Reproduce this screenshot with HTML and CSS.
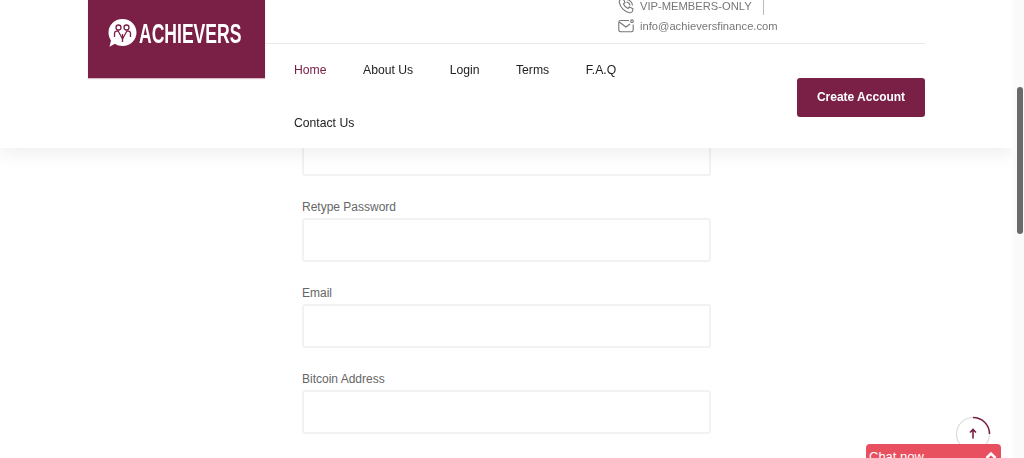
FILE: index.html
```html
<!DOCTYPE html>
<html lang="en">
<head>
    <meta charset="UTF-8">
    <meta name="viewport" content="width=device-width, initial-scale=1.0">
    <title>Achievers - Register</title>
    <link rel="stylesheet" href="styles.css">
</head>
<body>
    <header class="site-header">
        <a class="logo" href="#">
            <svg class="logo-icon" width="29" height="30" viewBox="0 0 29 30">
                <path fill="#fff" d="M14.500 1C22.500 1 28.500 7 28.500 14.500S22.500 28 14.500 28C11.500 28 9 27.200 7 25.800L1.500 28.800L3 22.500C1.500 20.200 .5 17.500 .5 14.500C.5 7 6.500 1 14.500 1Z"/>
                <g fill="none" stroke="#7a1f47" stroke-width="1.300">
                    <circle cx="10.500" cy="9.500" r="2.500"/>
                    <circle cx="18.500" cy="9.500" r="2.500"/>
                    <path d="M6.500 19V15.500C6.500 13.500 8 12.800 10 12.800L14.500 21L19 12.800C21 12.800 22.500 13.500 22.500 15.500V19"/>
                    <path d="M14.500 16V24"/>
                </g>
            </svg>
            <span class="logo-text">ACHIEVERS</span>
        </a>

        <div class="header-right">
            <div class="contact-bar">
                <div class="contact-row">
                    <svg class="contact-icon" width="16" height="16" viewBox="0 0 16 16" fill="none" stroke="#777" stroke-width="1.100">
                        <path d="M3.200 1.500L5.300 1L7 4.500L5.500 6C6.300 8 8 9.700 10 10.500L11.500 9L15 10.700L14.500 12.800C14.200 14.200 13 15 11.700 14.700C6.500 13.700 2.300 9.500 1.300 4.300C1 3 1.800 1.800 3.200 1.500Z"/>
                        <path d="M8.500 1.500C11.700 1.700 14.300 4.300 14.500 7.500"/>
                        <path d="M8.500 4C10.300 4.200 11.800 5.700 12 7.500"/>
                    </svg>
                    <span class="contact-text">VIP-MEMBERS-ONLY</span>
                    <span class="contact-sep"></span>
                </div>
                <div class="contact-row">
                    <svg class="contact-icon" width="16" height="14" viewBox="0 0 16 14" fill="none" stroke="#777" stroke-width="1.100">
                        <path d="M11 1.500H2.500C1.500 1.500 .8 2.200 .8 3.200V11C.8 12 1.500 12.700 2.500 12.700H13.500C14.500 12.700 15.200 12 15.200 11V5.500"/>
                        <path d="M1.200 3L8 8L12 5"/>
                        <circle cx="14" cy="2.200" r="1.300"/>
                    </svg>
                    <span class="contact-text">info@achieversfinance.com</span>
                </div>
            </div>

            <div class="nav-row">
                <ul class="main-nav">
                    <li><a class="active" href="#">Home</a></li>
                    <li><a href="#">About Us</a></li>
                    <li><a href="#">Login</a></li>
                    <li><a href="#">Terms</a></li>
                    <li><a href="#">F.A.Q</a></li>
                    <li><a href="#">Contact Us</a></li>
                </ul>
                <a class="btn" href="#">Create Account</a>
            </div>
        </div>
    </header>

    <main class="form-wrap">
        <div class="form-group">
            <input type="password" class="input-field">
        </div>
        <div class="form-group">
            <label>Retype Password</label>
            <input type="password" class="input-field">
        </div>
        <div class="form-group">
            <label>Email</label>
            <input type="text" class="input-field">
        </div>
        <div class="form-group">
            <label>Bitcoin Address</label>
            <input type="text" class="input-field">
        </div>
    </main>

    <a class="to-top" href="#">
        <svg width="36" height="36" viewBox="0 0 36 36" fill="none">
            <circle cx="18" cy="18" r="16.500" stroke="#dcdcdc" stroke-width="1.200"/>
            <path d="M18 1.500A16.500 16.500 0 0 1 34.500 18" stroke="#7a2047" stroke-width="1.500"/>
            <path d="M18 22.500V13.500M15 16.500L18 13.500L21 16.500" stroke="#7a2047" stroke-width="1.600"/>
        </svg>
    </a>

    <div class="chat-bar">
        <span>Chat now</span>
        <svg width="12" height="8" viewBox="0 0 12 8" fill="none" stroke="#fff" stroke-width="2.500">
            <path d="M1.500 7L6 2.500L10.500 7"/>
        </svg>
    </div>

    <div class="scrollbar"><div class="scrollbar-thumb"></div></div>
</body>
</html>
```

FILE: styles.css
```css
body {
    font-family: "Liberation Sans", Arial, sans-serif;
    background-color: #fff;
    margin: 0;
    padding: 0;
    height: 458px;
    overflow: hidden;
}

a {
    text-decoration: none;
}

/* header stays on top of the page */
.site-header {
    position: fixed;
    top: 0;
    left: 0;
    width: 1013px;
    height: 148px;
    box-sizing: border-box;
    padding: 0 88px;
    display: flex;
    background-color: #fff;
    box-shadow: 0 2px 22px rgba(0, 0, 0, 0.09);
    z-index: 5;
}

.logo {
    width: 177px;
    height: 78px;
    flex-shrink: 0;
    box-sizing: border-box;
    padding: 18px 0 0 20px;
    display: flex;
    align-items: flex-start;
    gap: 2px;
    background-color: #7a2047;
    box-shadow: 0 1px 1px rgba(122, 31, 71, 0.3);
}

.logo-icon {
    flex-shrink: 0;
}

.logo-text {
    display: block;
    flex-shrink: 0;
    font-weight: 700;
    font-size: 27px;
    line-height: 33px;
    color: #fff;
    transform: scaleX(0.65);
    transform-origin: left center;
}

.header-right {
    flex: 1;
}

.contact-bar {
    height: 44px;
    box-sizing: border-box;
    padding-left: 353px;
    display: flex;
    flex-direction: column;
    border-bottom: 1px solid #e9e9e9;
}

.contact-row {
    height: 20px;
    flex-shrink: 0;
    display: flex;
    align-items: center;
    gap: 6px;
    font-size: 11.200px;
    color: #777;
}

.contact-row:first-child {
    margin-top: -4px;
}

.contact-sep {
    width: 1px;
    height: 18px;
    margin-left: 5px;
    background-color: #bbb;
}

.nav-row {
    display: flex;
    justify-content: space-between;
    padding-left: 29px;
}

.main-nav {
    width: 380px;
    margin: 0;
    padding: 0;
    list-style: none;
    display: flex;
    flex-wrap: wrap;
    column-gap: 36.500px;
}

.main-nav li {
    line-height: 53px;
    font-size: 12.200px;
}

.main-nav a {
    color: #222;
}

.main-nav a.active {
    color: #7a2047;
}

.btn {
    width: 128px;
    height: 39px;
    margin-top: 34px;
    line-height: 39px;
    text-align: center;
    font-size: 12px;
    font-weight: 700;
    color: #fff;
    background-color: #7a2047;
    border-radius: 3px;
}

/* form is scrolled up under the header */
.form-wrap {
    width: 409px;
    margin-left: 302px;
    padding-top: 132px;
}

.form-group {
    margin-bottom: 27px;
}

.form-group label {
    display: block;
    height: 15px;
    line-height: 9px;
    font-size: 12px;
    color: #666;
}

.input-field {
    display: block;
    width: 100%;
    height: 44px;
    box-sizing: border-box;
    margin: 0;
    border: 2px solid #f2f2f2;
    border-radius: 3px;
    background-color: #fff;
}

.to-top {
    position: fixed;
    left: 955px;
    top: 416px;
    width: 36px;
    height: 36px;
}

.chat-bar {
    position: fixed;
    left: 866px;
    top: 444px;
    width: 135px;
    height: 30px;
    box-sizing: border-box;
    padding: 5px 4px 0 3px;
    display: flex;
    justify-content: space-between;
    align-items: flex-start;
    font-size: 13px;
    line-height: 15px;
    color: #fff;
    background-color: #e8505f;
    border-radius: 4px 4px 0 0;
}

.chat-bar svg {
    margin-top: 2px;
}

.scrollbar {
    position: fixed;
    top: 0;
    right: 0;
    width: 11px;
    height: 458px;
    background-color: #fafafa;
    z-index: 6;
}

.scrollbar-thumb {
    width: 6px;
    height: 147px;
    margin: 87px 0 0 4px;
    border-radius: 3px;
    background-color: #6a6a6a;
}
```
